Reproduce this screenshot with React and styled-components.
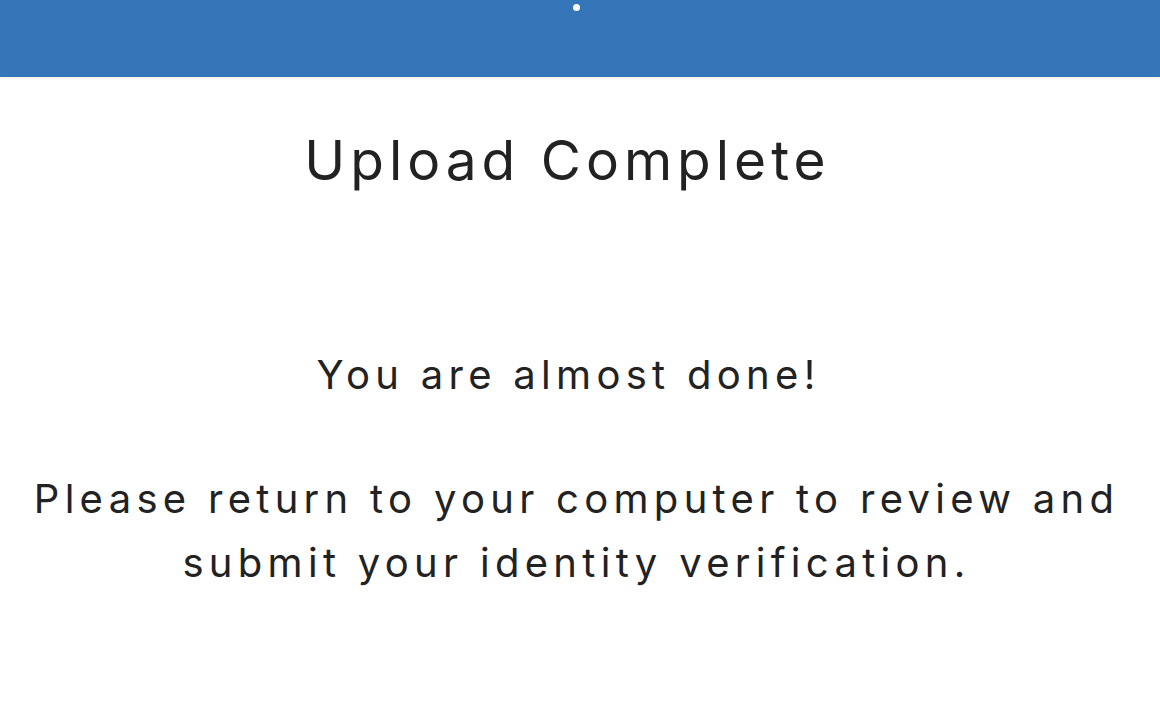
import React from "react";
import styled, { createGlobalStyle } from "styled-components";

const Global = createGlobalStyle`
  html, body { margin: 0; padding: 0; background: #ffffff; }
  body { font-family: "Inter", "Noto Sans", sans-serif; color: #222222; }
`;

const Page = styled.div`
  display: flex;
  flex-direction: column;
  min-height: 722px;
`;

const Header = styled.header`
  height: 77px;
  background: #3476b8;
  box-shadow: 0 1px 4px rgba(0, 0, 0, 0.08);
  display: flex;
  justify-content: center;
  align-items: flex-start;
  padding: 4px 7px 0 0;
  box-sizing: border-box;
`;

const Dot = styled.span`
  width: 7px;
  height: 7px;
  border-radius: 50%;
  background: #ffffff;
`;

const Main = styled.main`
  display: flex;
  flex-direction: column;
  align-items: center;
  text-align: center;
  padding: 0 7px 0 0;
`;

const Title = styled.h1`
  margin: 43px 18px 0 0;
  font-size: 55px;
  line-height: 80px;
  font-weight: 400;
  letter-spacing: 5px;
`;

const Message = styled.p`
  margin: ${(p) => p.$top}px ${(p) => p.$shift || 0}px 0 0;
  font-size: 40px;
  line-height: 64px;
  font-weight: 400;
  letter-spacing: 5.3px;
`;

export default function App() {
  return (
    <Page>
      <Global />
      <Header>
        <Dot />
      </Header>
      <Main>
        <Title>Upload Complete</Title>
        <Message $top={143} $shift={16}>You are almost done!</Message>
        <Message $top={60}>
          Please return to your computer to review and
          <br />
          submit your identity verification.
        </Message>
      </Main>
    </Page>
  );
}
